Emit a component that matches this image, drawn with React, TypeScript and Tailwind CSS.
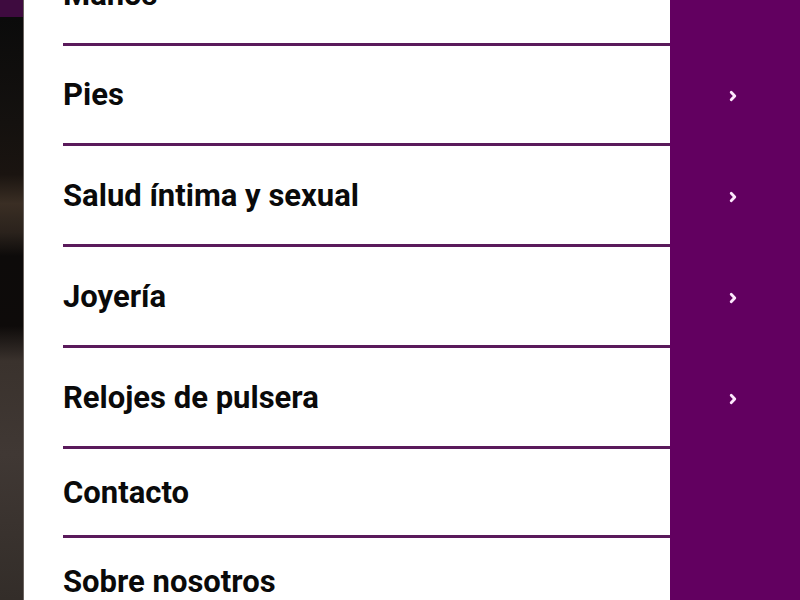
const items = [
  { label: "Manos", sub: false, h: "h-[101px]" },
  { label: "Pies", sub: true, h: "h-[100px]" },
  { label: "Salud íntima y sexual", sub: true, h: "h-[101px]" },
  { label: "Joyería", sub: true, h: "h-[101px]" },
  { label: "Relojes de pulsera", sub: true, h: "h-[101px]" },
  { label: "Contacto", sub: false, h: "h-[89px]" },
  { label: "Sobre nosotros", sub: false, h: "h-[89px]" },
];

const Chevron = () => (
  <svg width="10" height="12" viewBox="0 0 10 12" fill="none">
    <polyline
      points="3.2,2.2 6.8,6 3.2,9.8"
      stroke="#fde8fd"
      strokeWidth="2.8"
      strokeLinecap="round"
      strokeLinejoin="round"
    />
  </svg>
);

export default function App() {
  return (
    <div
      className="flex h-screen w-full overflow-hidden bg-white"
      style={{ fontFamily: "Roboto, 'Liberation Sans', sans-serif" }}
    >
      {/* blurred page behind the drawer */}
      <div className="flex w-[24px] shrink-0 flex-col border-r border-[#6b6460]">
        <div className="h-[17px] bg-[#3e0b3f]" />
        <div className="flex-1 bg-[linear-gradient(180deg,#0b0b0b_0%,#14110f_18%,#1a1410_27%,#3a2e24_32%,#2a221c_37%,#0d0b0a_41%,#0e0b0a_53%,#3a322d_59%,#403834_75%,#332d29_100%)]" />
      </div>

      {/* drawer menu */}
      <div className="flex-1">
        <ul className="-mt-[55px]">
          {items.map((item) => (
            <li key={item.label} className="flex">
              <div className="flex-1 bg-white pl-[39px]">
                <div
                  className={`flex items-center border-b-[3px] border-[#5a1a5b] ${item.h}`}
                >
                  <span className="text-[31px] font-bold leading-none text-[#0a0a0a]">
                    {item.label}
                  </span>
                </div>
              </div>
              <div className="flex w-[130px] items-center justify-center bg-[#620060] pr-[4px]">
                {item.sub && <Chevron />}
              </div>
            </li>
          ))}
        </ul>
      </div>
    </div>
  );
}
